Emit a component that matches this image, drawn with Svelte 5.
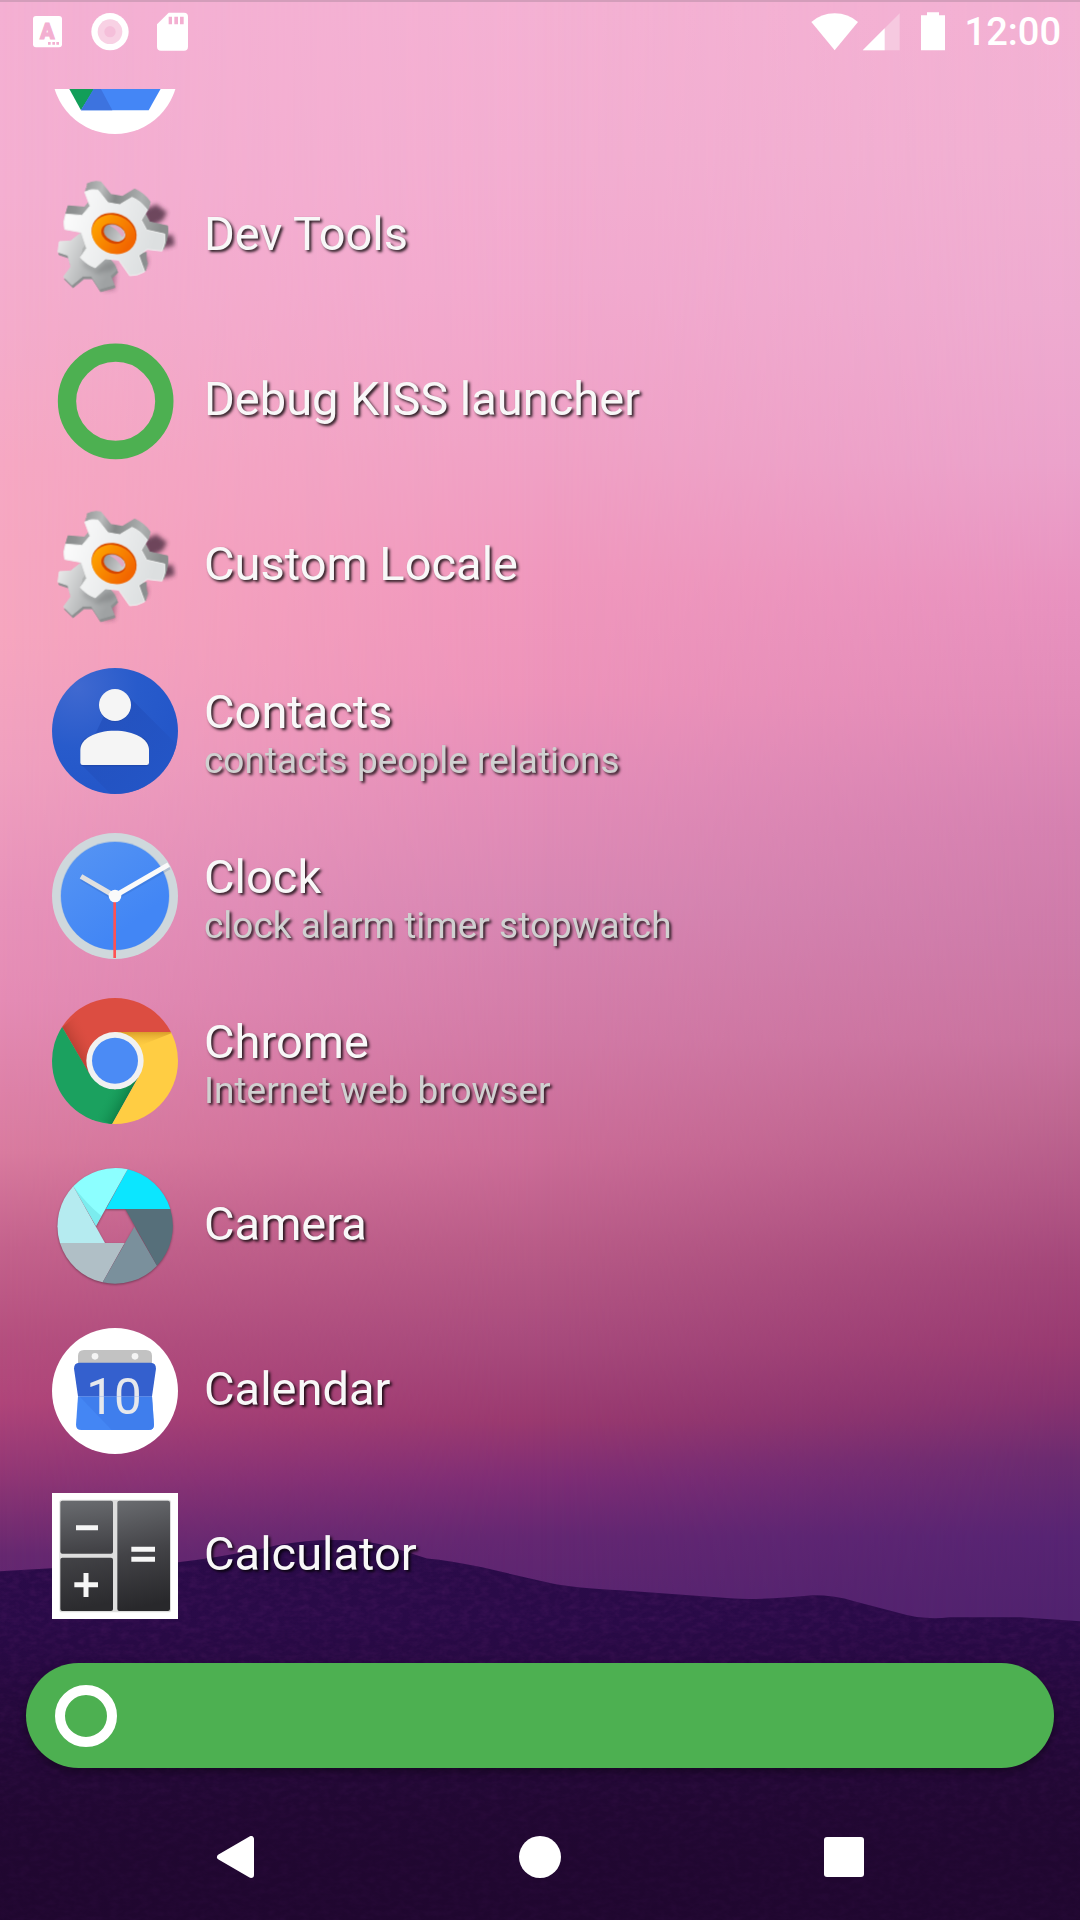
<script>
  // The list grows upwards: the first entry sits at the bottom, next to the search bar.
  const apps = [
    { name: 'Calculator', icon: calculator },
    { name: 'Calendar', icon: calendar },
    { name: 'Camera', icon: camera },
    { name: 'Chrome', tags: 'Internet web browser', icon: chrome },
    { name: 'Clock', tags: 'clock alarm timer stopwatch', icon: clock },
    { name: 'Contacts', tags: 'contacts people relations', icon: contacts },
    { name: 'Custom Locale', icon: gears },
    { name: 'Debug KISS launcher', icon: ring },
    { name: 'Dev Tools', icon: gears },
    { icon: drive }
  ];
  const gearFront =
    'M110 66Q128 55 150 60L180 98L215 104L252 82Q280 94 298 120L280 150L296 180L350 192Q354 220 342 243L298 238L272 256L290 305Q268 318 245 317L212 270L172 266L142 293Q116 284 97 262L116 235L100 187L50 178Q44 156 53 132L102 136L126 108Z';
  const gearBack =
    'M34 215L68 213L110 180L165 240L200 285L206 300L187 318L198 344L155 357L130 318L105 318L72 345L47 320L69 290L60 256L30 246Z';
</script>

{#snippet drive()}
  <svg viewBox="156 24 378 378" aria-hidden="true">
    <circle cx="345" cy="213" r="189" fill="#fff" />
    <path d="M300 120L155 170L243 331L345 172Z" fill="#129e59" />
    <path d="M300 235L530 180L446 331H243Z" fill="#4486f6" />
    <path d="M300 235L282 266L243 331H337L298 258Z" fill="#3d73df" />
  </svg>
{/snippet}

{#snippet gears()}
  <svg viewBox="12 9 378 378" aria-hidden="true">
    <defs>
      <linearGradient id="gear-face" x1="0" x2="1" y1="0" y2=".3">
        <stop offset="0" stop-color="#fff" /><stop offset="1" stop-color="#dcdfe0" />
      </linearGradient>
      <linearGradient id="gear-side" x1="0" x2="1" y1="0" y2=".2">
        <stop offset="0" stop-color="#858888" /><stop offset=".15" stop-color="#909393" />
        <stop offset=".35" stop-color="#b9bbbb" /><stop offset=".5" stop-color="#858888" />
        <stop offset=".75" stop-color="#aeb1b1" /><stop offset="1" stop-color="#8b8e8e" />
      </linearGradient>
      <linearGradient id="gear-rear" x1="0" x2="1" y1="0" y2=".4">
        <stop offset="0" stop-color="#eff0f0" /><stop offset=".6" stop-color="#b9bbbc" /><stop offset="1" stop-color="#9fa2a3" />
      </linearGradient>
      <linearGradient id="gear-hole" x1="0" x2="1" y1="0" y2="0">
        <stop offset="0" stop-color="#9a9d9e" /><stop offset="1" stop-color="#d2d3d4" />
      </linearGradient>
      <linearGradient id="gear-ring" x1="0" x2="1" y1="0" y2=".2">
        <stop offset="0" stop-color="#ffa800" /><stop offset="1" stop-color="#f26500" />
      </linearGradient>
      <filter id="gear-blur" x="-50%" y="-50%" width="200%" height="200%"><feGaussianBlur stdDeviation="6" /></filter>
    </defs>
    <g fill="#553448" opacity=".85" filter="url(#gear-blur)">
      <path d="M285 120L325 103L357 127L345 150L300 175Z" />
      <path d="M335 195L375 195L380 225L345 235Z" />
      <path d="M272 250L300 262L298 290L270 295Z" opacity=".6" />
      <path d="M160 300L205 300L200 360L165 362Z" opacity=".5" />
    </g>
    <path d={gearBack} fill="#8d9091" transform="translate(3 8)" stroke="#8d9091" stroke-width="3" stroke-linejoin="round" />
    <path d={gearBack} fill="url(#gear-rear)" stroke="url(#gear-rear)" stroke-width="3" stroke-linejoin="round" />
    <path d="M100 270L142 300L175 276L210 280L192 300L150 312L110 290Z" fill="#6d7071" opacity=".4" filter="url(#gear-blur)" />
    <g fill="url(#gear-side)" stroke="url(#gear-side)" stroke-width="4" stroke-linejoin="round">
      <path d={gearFront} transform="translate(8 -24)" />
      <path d={gearFront} transform="translate(7 -18)" />
      <path d={gearFront} transform="translate(5 -11)" />
      <path d={gearFront} transform="translate(3 -5)" />
    </g>
    <path d="M275 252L296 245L296 282L286 292Z" fill="#8b8e8f" />
    <path d={gearFront} fill="url(#gear-face)" stroke="#eff0f0" stroke-width="3" stroke-linejoin="round" />
    <g transform="rotate(24 197 192)">
      <ellipse cx="197" cy="189" rx="69" ry="59" fill="#da4c00" />
      <ellipse cx="198" cy="193" rx="68" ry="57" fill="url(#gear-ring)" />
      <ellipse cx="196" cy="191" rx="38" ry="29" fill="#d54500" />
      <ellipse cx="198" cy="188" rx="34" ry="24" fill="url(#gear-hole)" />
    </g>
    <path d="M184 166Q214 162 229 190Q228 200 222 200Q206 176 184 166Z" fill="#e3a9c6" />
  </svg>
{/snippet}

{#snippet ring()}
  <svg viewBox="66 534 378 378" aria-hidden="true">
    <circle cx="257" cy="724" r="146" fill="none" stroke="#4db051" stroke-width="55" />
  </svg>
{/snippet}

{#snippet contacts()}
  <svg viewBox="66 54 378 378" aria-hidden="true">
    <defs>
      <radialGradient id="contact-disc" cx=".2" cy=".15" r=".8">
        <stop offset="0" stop-color="#4069d0" /><stop offset=".6" stop-color="#285bcb" /><stop offset="1" stop-color="#2457c9" />
      </radialGradient>
      <linearGradient id="contact-shade" x1="0" x2="1" y1="0" y2="1">
        <stop offset="0" stop-color="#214bb5" /><stop offset="1" stop-color="#2457c9" />
      </linearGradient>
      <clipPath id="contact-clip"><circle cx="255" cy="243" r="189" /></clipPath>
    </defs>
    <circle cx="255" cy="243" r="189" fill="url(#contact-disc)" />
    <g clip-path="url(#contact-clip)">
      <path d="M288 131L450 293V450H260L153 343L221 199Z" fill="url(#contact-shade)" opacity=".7" />
    </g>
    <circle cx="255" cy="167" r="48" fill="#1c409c" opacity=".5" />
    <path d="M151 290C151 265 190 246 254 246S357 265 357 290V342Q357 349 350 349H158Q151 349 151 342Z" fill="#1c409c" opacity=".5" />
    <circle cx="255" cy="165" r="48" fill="#f5f5f5" />
    <path d="M151 300C151 266 196 242 254 242S357 266 357 300V338Q357 345 350 345H158Q151 345 151 338Z" fill="#f5f5f5" />
  </svg>
{/snippet}

{#snippet clock()}
  <svg viewBox="66 549 378 378" aria-hidden="true">
    <defs>
      <linearGradient id="clock-face" x1="0" x2=".6" y1="0" y2=".8">
        <stop offset="0" stop-color="#5795f3" /><stop offset="1" stop-color="#4286f5" />
      </linearGradient>
    </defs>
    <circle cx="255" cy="738" r="189" fill="#cfd8dc" />
    <circle cx="255" cy="737" r="164" fill="#a9c1df" />
    <circle cx="255" cy="738" r="162" fill="url(#clock-face)" />
    <path d="M155 686L254 745L418 652" fill="none" stroke="#23509b" stroke-width="14" opacity=".18" />
    <path d="M153 679L254 738" stroke="#e0e0e0" stroke-width="15" />
    <path d="M254 738L416 644" stroke="#fafafa" stroke-width="15" />
    <path d="M254 738V924" stroke="#ff5252" stroke-width="8" />
    <circle cx="255" cy="738" r="19" fill="#fafafa" />
  </svg>
{/snippet}

{#snippet chrome()}
  <svg viewBox="66 54 378 378" aria-hidden="true">
    <defs>
      <clipPath id="chrome-clip"><circle cx="255" cy="243" r="189" /></clipPath>
      <linearGradient id="chrome-red" gradientUnits="userSpaceOnUse" x1="125" y1="215" x2="190" y2="178">
        <stop offset="0" stop-color="#b03b2f" /><stop offset="1" stop-color="#dd4f42" stop-opacity="0" />
      </linearGradient>
      <linearGradient id="chrome-green" gradientUnits="userSpaceOnUse" x1="290" y1="365" x2="235" y2="335">
        <stop offset="0" stop-color="#0d7d45" /><stop offset="1" stop-color="#18a05d" stop-opacity="0" />
      </linearGradient>
      <linearGradient id="chrome-gold" x1="0" x2="0" y1="0" y2="1">
        <stop offset="0" stop-color="#d99e2a" /><stop offset="1" stop-color="#ffcd43" stop-opacity="0" />
      </linearGradient>
    </defs>
    <g clip-path="url(#chrome-clip)">
      <path d="M60 40H450V156H255L180 285L97 142L60 90Z" fill="#dc4d41" />
      <path d="M97 142L180 285L255 243L250 156L160 90Z" fill="url(#chrome-red)" />
      <path d="M97 142L181 286L255 329L328 285L245 434H40V60Z" fill="#1ba15f" />
      <path d="M328 285L245 434L190 410L240 320Z" fill="url(#chrome-green)" />
      <path d="M255 156H450V440H242L329 285L340 243Z" fill="#ffcd43" />
      <path d="M262 156H425L424 160L310 205Z" fill="url(#chrome-gold)" />
    </g>
    <circle cx="255" cy="242" r="86" fill="#f1f1f1" />
    <circle cx="255" cy="242" r="69" fill="#4b8bf5" />
  </svg>
{/snippet}

{#snippet camera()}
  <svg class="lifted" viewBox="66 549 378 378" aria-hidden="true">
    <path d="M293 568A174 174 0 0 1 421 687H228Z" fill="#0be6ff" />
    <path d="M130 619A174 174 0 0 1 293 568L198 738Z" fill="#8cffff" />
    <path d="M130 619L198 738L214 708Q168 670 130 619Z" fill="#6fdfe2" opacity=".6" />
    <path d="M90 789A174 174 0 0 1 130 619L225 789Z" fill="#b5ebf0" />
    <path d="M218 907A174 174 0 0 1 90 789H284Z" fill="#b0bfc6" />
    <path d="M381 857A174 174 0 0 1 218 907L313 740Z" fill="#7a909c" />
    <path d="M421 687A174 174 0 0 1 381 857L286 687Z" fill="#566f7a" />
  </svg>
{/snippet}

{#snippet calendar()}
  <svg viewBox="66 54 378 378" aria-hidden="true">
    <circle cx="255" cy="243" r="189" fill="#fff" />
    <path d="M144 165V138Q144 120 162 120H348Q366 120 366 138V165Z" fill="#c2c2c2" />
    <circle cx="195" cy="139" r="10" fill="#f4f4f4" />
    <circle cx="315" cy="139" r="10" fill="#f4f4f4" />
    <path d="M144 259H366L372 344Q372 360 356 360H154Q138 360 138 344Z" fill="#4486f4" />
    <path d="M148 259L245 360H356Q372 360 372 344L366 259Z" fill="#3d7bea" opacity=".7" />
    <path d="M132 176Q132 158 148 158H362Q378 158 378 176L366 259H144Z" fill="#3460ce" />
    <text class="day" x="252" y="313" text-anchor="middle">10</text>
    <path d="M144 259H366" stroke="#7d9fe6" stroke-width="2" opacity=".6" />
  </svg>
{/snippet}

{#snippet calculator()}
  <svg viewBox="66 549 378 378" aria-hidden="true">
    <defs>
      <linearGradient id="key-top" x1="0" x2=".1" y1="0" y2="1">
        <stop offset="0" stop-color="#6a6c70" /><stop offset="1" stop-color="#424246" />
      </linearGradient>
      <linearGradient id="key-low" x1="0" x2=".2" y1="0" y2="1">
        <stop offset="0" stop-color="#434347" /><stop offset="1" stop-color="#2b2b2e" />
      </linearGradient>
      <linearGradient id="key-tall" x1="0" x2=".1" y1="0" y2="1">
        <stop offset="0" stop-color="#6a6c70" /><stop offset=".5" stop-color="#434347" /><stop offset="1" stop-color="#28282b" />
      </linearGradient>
    </defs>
    <path d="M66 549H444V927H66Z" fill="#fff" />
    <rect x="88" y="569" width="335" height="338" rx="8" fill="#dedede" />
    <rect x="91" y="572" width="158" height="159" rx="6" fill="url(#key-top)" />
    <rect x="91" y="743" width="158" height="160" rx="6" fill="url(#key-low)" />
    <rect x="262" y="572" width="158" height="331" rx="6" fill="url(#key-tall)" />
    <path d="M138 653H204M133 824H204M168 789V861M304 718H375M304 748H375" stroke="#f6f6f6" stroke-width="15" />
  </svg>
{/snippet}

<div class="phone">
  <div class="wallpaper" aria-hidden="true">
    <div class="sky middle"></div>
    <div class="sky right"></div>
    <svg class="hills" viewBox="0 0 1080 1920" preserveAspectRatio="none">
      <defs>
        <linearGradient id="hill" gradientUnits="userSpaceOnUse" x1="0" y1="1540" x2="0" y2="1920">
          <stop offset="0" stop-color="#2a0b49" /><stop offset=".3" stop-color="#290a47" />
          <stop offset=".65" stop-color="#240938" /><stop offset="1" stop-color="#1f062d" />
        </linearGradient>
        <filter id="grain" x="0" y="0" width="100%" height="100%" color-interpolation-filters="sRGB">
          <feTurbulence type="fractalNoise" baseFrequency=".1 .18" numOctaves="3" seed="4" result="noise" />
          <feColorMatrix in="noise" values="0 0 0 0 .3  0 0 0 0 .1  0 0 0 0 .38  .8 0 0 0 -.3" result="specks" />
          <feComposite in="specks" in2="SourceGraphic" operator="in" result="rough" />
          <feMerge><feMergeNode in="SourceGraphic" /><feMergeNode in="rough" /></feMerge>
        </filter>
        <linearGradient id="hill-fade" gradientUnits="userSpaceOnUse" x1="0" y1="1600" x2="0" y2="1850">
          <stop offset="0" stop-color="#200732" stop-opacity="0" /><stop offset="1" stop-color="#200730" stop-opacity=".7" />
        </linearGradient>
      </defs>
      <path
        d="M0 1571L52 1568Q120 1568 178 1562Q230 1556 276 1545Q338 1534 386 1545L427 1558Q450 1560 482 1567L551 1583Q575 1588 620 1590L730 1598Q760 1600 813 1595Q835 1595 854 1601L900 1613Q923 1620 950 1617H1020L1080 1621V1920H0Z"
        fill="url(#hill)"
        filter="url(#grain)"
      />
      <path d="M0 1630H1080V1920H0Z" fill="url(#hill-fade)" />
    </svg>
  </div>

  <header class="status">
    <div class="notices">
      <svg width="30" height="40" viewBox="99 35 90 120" aria-hidden="true">
        <rect x="99" y="47" width="87" height="94" rx="9" fill="#fff" />
        <text class="letter" x="142" y="115" text-anchor="middle">A</text>
        <path d="M144 129h8M157 129h8M169 129h8" stroke="#f3afd1" stroke-width="8" />
      </svg>
      <svg width="38" height="40" viewBox="274 35 114 120" aria-hidden="true">
        <circle cx="331" cy="94" r="56" fill="#fff" />
        <circle cx="331" cy="94" r="37" fill="#f8d1e4" />
        <circle cx="331" cy="94" r="17" fill="#f5bfda" />
      </svg>
      <svg width="31" height="40" viewBox="474 35 93 120" aria-hidden="true">
        <path d="M509 37H555Q567 37 567 49V139Q567 151 555 151H486Q474 151 474 139V72Z" fill="#fff" />
        <path d="M509 49h10v23h-10zM526 49h11v23h-11zM543 49h11v23h-11z" fill="#f3afd1" />
      </svg>
    </div>
    <div class="system">
      <svg width="90" height="40" viewBox="94 35 270 120" aria-hidden="true">
        <path d="M95 65Q125 39 165 39T235 65L165 150Z" fill="#fff" />
        <path d="M360 39V150H249Z" fill="#f6c9e0" />
        <path d="M315 84V150H249Z" fill="#fff" />
      </svg>
      <svg width="24" height="40" viewBox="426 35 72 120" aria-hidden="true">
        <path d="M444 36H480V45H498V150H426V45H444Z" fill="#fff" />
      </svg>
      <time>12:00</time>
    </div>
  </header>

  <ul class="apps">
    {#each apps as app}
      <li>
        <button class="app" type="button" aria-label={app.name ?? 'Drive'}>
          {@render app.icon()}
          {#if app.name}
            <span class="label" class:tagged={app.tags}>
              <span class="name">{app.name}</span>
              {#if app.tags}<span class="tags">{app.tags}</span>{/if}
            </span>
          {/if}
        </button>
      </li>
    {/each}
  </ul>

  <form class="search">
    <button class="launcher" type="button" aria-label="Show all apps">
      <svg viewBox="0 0 62 62" aria-hidden="true">
        <circle cx="31" cy="31" r="26" fill="none" stroke="#fff" stroke-width="10" />
      </svg>
    </button>
    <input type="text" aria-label="Search" />
  </form>

  <nav>
    <button type="button" aria-label="Back">
      <svg viewBox="0 0 42 42" aria-hidden="true">
        <path d="M5 21L36 3V39Z" fill="#fff" stroke="#fff" stroke-width="6" stroke-linejoin="round" />
      </svg>
    </button>
    <button type="button" aria-label="Home">
      <svg viewBox="0 0 42 42" aria-hidden="true"><circle cx="21" cy="21" r="21" fill="#fff" /></svg>
    </button>
    <button type="button" aria-label="Recent apps">
      <svg viewBox="0 0 42 42" aria-hidden="true"><rect x="1" y="1" width="40" height="40" rx="3" fill="#fff" /></svg>
    </button>
  </nav>
</div>

<style>
  :global(body) {
    margin: 0;
  }
  .phone {
    position: relative;
    isolation: isolate;
    display: flex;
    flex-direction: column;
    height: 100vh;
    overflow: hidden;
    font-family: Roboto, 'Noto Sans', sans-serif;
  }
  button {
    border: 0;
    padding: 0;
    background: none;
    font: inherit;
    color: inherit;
  }
  svg {
    display: block;
    flex: none;
  }

  .wallpaper {
    position: absolute;
    inset: 0;
    z-index: -1;
    border-top: 2px solid #d39dba;
    background: linear-gradient(
      #f4b0d3 0%,
      #f4afd1 10%,
      #f4accb 17%,
      #f6a8c3 24%,
      #f6a6bf 33%,
      #f0a0bf 40%,
      #e892ba 47%,
      #e58cb5 52%,
      #d97b9f 60%,
      #c4628c 65%,
      #b44e7e 70%,
      #b0457a 73%,
      #8f3675 77%,
      #662870 81%,
      #5f2672 84%
    );
  }
  .sky {
    position: absolute;
    inset: 0;
  }
  .middle {
    background: linear-gradient(
      #f4b1d3 0%,
      #f3aed1 8%,
      #f2a9ce 15%,
      #f0a2c6 23%,
      #f098bd 30%,
      #ed93ba 36%,
      #e38db8 41%,
      #d887b3 47%,
      #d27aa6 54%,
      #cb6c97 60%,
      #b85b87 65%,
      #a74a7c 70%,
      #99396f 74%,
      #7e2d75 77%,
      #642772 80%,
      #5b2570 83%
    );
    mask-image: linear-gradient(90deg, transparent, #000 50%);
  }
  .right {
    background: linear-gradient(
      #f3b1d3 0%,
      #f1b0d2 8%,
      #eeabd0 16%,
      #eba2cb 24%,
      #e892bf 31%,
      #e18bb8 37%,
      #d581b0 43%,
      #cd7aa8 49%,
      #c9739f 54%,
      #be6791 58%,
      #b25786 62%,
      #a34679 66%,
      #983a71 70%,
      #87326f 73%,
      #6b2b70 76%,
      #572473 80%,
      #50226e 84%
    );
    mask-image: linear-gradient(90deg, transparent 50%, #000);
  }
  .hills {
    position: absolute;
    inset: 0;
    width: 100%;
    height: 100%;
  }

  .status {
    display: flex;
    justify-content: space-between;
    align-items: center;
    height: 63px;
    margin-bottom: 26px;
    padding: 0 19px 0 33px;
    color: #fff;
  }
  .notices,
  .system {
    display: flex;
    align-items: center;
  }
  .notices {
    gap: 28px;
  }
  .system {
    gap: 20px;
  }
  .letter {
    font: 900 64px Roboto, sans-serif;
    fill: #f3afd1;
    stroke: #f3afd1;
    stroke-width: 3px;
  }
  time {
    font-size: 38px;
    font-weight: 500;
    line-height: 42px;
  }

  .apps {
    display: flex;
    flex-direction: column-reverse;
    flex: 1;
    min-height: 0;
    margin: 0;
    padding: 0;
    overflow-y: auto;
    scrollbar-width: none;
    list-style: none;
  }
  .apps li {
    flex: none;
  }
  .app {
    display: flex;
    align-items: center;
    gap: 26px;
    width: 100%;
    padding: 20px 52px 19px;
    text-align: left;
  }
  .app svg {
    width: 126px;
    height: 126px;
  }
  .lifted {
    filter: drop-shadow(0 1px 1px rgb(0 0 0 / 0.35));
  }
  .day {
    font: 400 148px Roboto, sans-serif;
    fill: #e6e8ec;
  }
  .label {
    display: flex;
    flex-direction: column;
    padding-bottom: 4px;
    text-shadow: 2px 2px 3px rgb(0 0 0 / 0.85);
  }
  .tagged {
    padding: 3px 0 0;
  }
  .name {
    font-size: 47px;
    line-height: 56px;
    color: #f8f8f8;
  }
  .tags {
    font-size: 37px;
    line-height: 42px;
    color: #d0d0d0;
  }

  .search {
    display: flex;
    align-items: center;
    height: 105px;
    margin: 25px 26px 26px;
    border-radius: 53px;
    background: #4db051;
    box-shadow: 0 4px 8px rgb(0 0 0 / 0.35);
  }
  .launcher {
    margin-left: 29px;
  }
  .launcher svg {
    width: 62px;
    height: 62px;
  }
  input {
    flex: 1;
    min-width: 0;
    height: 100%;
    margin: 0 40px 0 20px;
    padding: 0;
    border: 0;
    outline: 0;
    background: none;
    font: 400 47px Roboto, sans-serif;
    color: #fff;
  }

  nav {
    display: flex;
    justify-content: center;
    height: 126px;
  }
  nav button {
    display: flex;
    align-items: center;
    justify-content: center;
    width: 304px;
  }
  nav svg {
    width: 42px;
    height: 42px;
  }
</style>
